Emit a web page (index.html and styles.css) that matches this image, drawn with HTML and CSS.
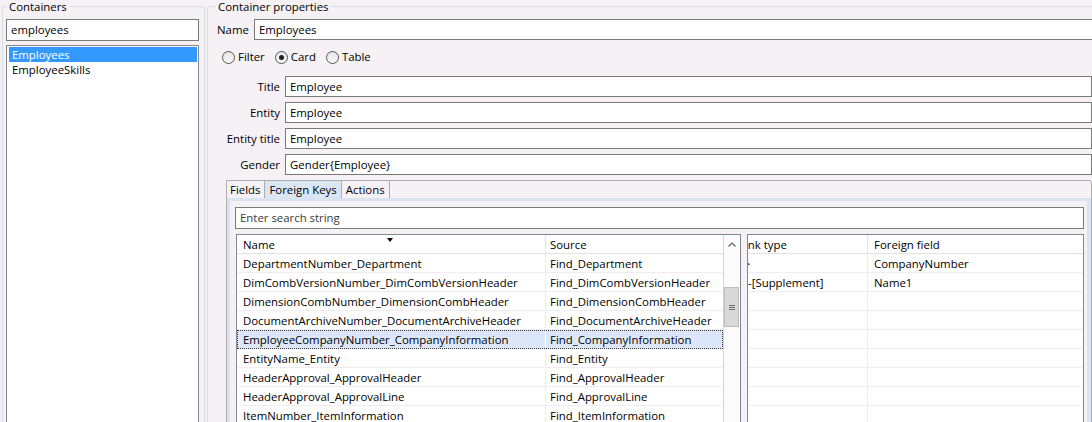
FILE: index.html
```html
<!DOCTYPE html>
<html>
<head>
<meta charset="utf-8">
<link rel="stylesheet" href="styles.css">
</head>
<body>
<div class="app">
  <fieldset class="group group-left">
    <legend>Containers</legend>
    <div class="left-body">
      <div class="field left-search">employees</div>
      <ul class="listbox">
        <li class="selected">Employees</li>
        <li>EmployeeSkills</li>
      </ul>
    </div>
  </fieldset>

  <fieldset class="group group-right">
    <legend>Container properties</legend>
    <div class="right-body">
      <div class="name-row">
        <span class="name-label">Name</span>
        <div class="field name-field">Employees</div>
      </div>

      <div class="radio-row">
        <label class="radio"><span class="circle"></span>Filter</label>
        <label class="radio"><span class="circle checked"></span>Card</label>
        <label class="radio"><span class="circle"></span>Table</label>
      </div>

      <div class="form">
        <span class="form-label">Title</span><div class="field">Employee</div>
        <span class="form-label">Entity</span><div class="field">Employee</div>
        <span class="form-label">Entity title</span><div class="field">Employee</div>
        <span class="form-label">Gender</span><div class="field">Gender{Employee}</div>
      </div>

      <div class="tabs">
        <div class="tab-strip">
          <span class="tab">Fields</span>
          <span class="tab active">Foreign Keys</span>
          <span class="tab">Actions</span>
        </div>
        <div class="tab-panel">
          <div class="field search">Enter search string</div>
          <div class="grids">
            <div class="grid grid-main">
              <div class="table">
                <div class="row head">
                  <div class="cell c-name">Name<span class="sort"></span></div>
                  <div class="cell c-src">Source</div>
                </div>
                <div class="row"><div class="cell c-name">DepartmentNumber_Department</div><div class="cell c-src">Find_Department</div></div>
                <div class="row"><div class="cell c-name">DimCombVersionNumber_DimCombVersionHeader</div><div class="cell c-src">Find_DimCombVersionHeader</div></div>
                <div class="row"><div class="cell c-name">DimensionCombNumber_DimensionCombHeader</div><div class="cell c-src">Find_DimensionCombHeader</div></div>
                <div class="row"><div class="cell c-name">DocumentArchiveNumber_DocumentArchiveHeader</div><div class="cell c-src">Find_DocumentArchiveHeader</div></div>
                <div class="row sel"><div class="cell c-name">EmployeeCompanyNumber_CompanyInformation</div><div class="cell c-src">Find_CompanyInformation</div></div>
                <div class="row"><div class="cell c-name">EntityName_Entity</div><div class="cell c-src">Find_Entity</div></div>
                <div class="row"><div class="cell c-name">HeaderApproval_ApprovalHeader</div><div class="cell c-src">Find_ApprovalHeader</div></div>
                <div class="row"><div class="cell c-name">HeaderApproval_ApprovalLine</div><div class="cell c-src">Find_ApprovalLine</div></div>
                <div class="row"><div class="cell c-name">ItemNumber_ItemInformation</div><div class="cell c-src">Find_ItemInformation</div></div>
              </div>
              <div class="scrollbar">
                <div class="sb-up">
                  <svg width="8" height="5" viewBox="0 0 8 5"><polyline points="0.5,4.5 4,1 7.5,4.5" fill="none" stroke="#606060" stroke-width="1.2"/></svg>
                </div>
                <div class="sb-track">
                  <div class="sb-thumb"><span class="grip"></span><span class="grip"></span><span class="grip"></span></div>
                </div>
              </div>
            </div>

            <div class="grid grid-side">
              <div class="table">
                <div class="row head">
                  <div class="cell c-link"><span class="shift">Link type</span></div>
                  <div class="cell c-ff">Foreign field</div>
                </div>
                <div class="row"><div class="cell c-link"><span class="shift s2">-&gt;</span></div><div class="cell c-ff">CompanyNumber</div></div>
                <div class="row"><div class="cell c-link"><span class="shift s3">&lt;-[Supplement]</span></div><div class="cell c-ff">Name1</div></div>
                <div class="row"><div class="cell c-link"></div><div class="cell c-ff"></div></div>
                <div class="row"><div class="cell c-link"></div><div class="cell c-ff"></div></div>
                <div class="row"><div class="cell c-link"></div><div class="cell c-ff"></div></div>
                <div class="row"><div class="cell c-link"></div><div class="cell c-ff"></div></div>
                <div class="row"><div class="cell c-link"></div><div class="cell c-ff"></div></div>
                <div class="row"><div class="cell c-link"></div><div class="cell c-ff"></div></div>
                <div class="row"><div class="cell c-link"></div><div class="cell c-ff"></div></div>
              </div>
            </div>
          </div>
        </div>
      </div>
    </div>
  </fieldset>
</div>
</body>
</html>
```

FILE: styles.css
```css
* { box-sizing: border-box; }

body {
  margin: 0;
  background: #f5f1f5;
  font-family: "Open Sans", "Liberation Sans", sans-serif;
  font-size: 11.4px;
  color: #000;
  overflow: hidden;
}

.app {
  display: flex;
  height: 422px;
  overflow: hidden;
  padding-left: 2px;
}

.group {
  margin: 0;
  padding: 0;
  border: 1px solid #d5dce3;
  border-radius: 3px;
  min-width: 0;
  height: 440px;
  flex: none;
}

.group legend {
  line-height: 13px;
  padding: 0 2px;
}

.group-left { width: 203px; }
.group-left legend { margin-left: 4px; }

.left-body { padding: 6px 0 0 3px; }

.field {
  background: #fff;
  border: 1px solid #7a7a7a;
  height: 21px;
  line-height: 19px;
  padding-left: 4px;
  white-space: nowrap;
  overflow: hidden;
}

.left-search {
  width: 193px;
  height: 22px;
  line-height: 20px;
  padding-left: 4px;
}

.listbox {
  list-style: none;
  margin: 4px 0 0 0;
  padding: 1px 1px;
  width: 193px;
  height: 400px;
  background: #fff;
  border: 1px solid #828790;
}

.listbox li {
  height: 15px;
  line-height: 15px;
  padding-left: 3px;
  margin-left: 1px;
}

.listbox li.selected {
  background: #3399ff;
  color: #fff;
}

.group-right {
  width: 891px;
  margin-left: 2px;
}

.group-right legend { margin-left: 8px; }

.right-body { padding: 6px 0 0 9px; }

.name-row {
  display: flex;
  align-items: center;
  height: 21px;
}

.name-label { width: 37px; flex: none; }
.name-field { flex: 1; }

.radio-row {
  display: flex;
  align-items: center;
  height: 14px;
  margin: 10px 0 0 5px;
}

.radio {
  display: flex;
  align-items: center;
  margin-right: 10px;
  line-height: 14px;
}

.circle {
  width: 13px;
  height: 13px;
  border-radius: 50%;
  border: 1px solid #555;
  background: linear-gradient(#e6e6e6, #fafafa);
  margin-right: 3px;
  display: flex;
  align-items: center;
  justify-content: center;
}

.circle.checked::after {
  content: "";
  width: 5px;
  height: 5px;
  border-radius: 50%;
  background: #222;
}

.form {
  display: grid;
  grid-template-columns: 63px 807px;
  column-gap: 5px;
  row-gap: 5px;
  margin-top: 12px;
}

.form-label {
  text-align: right;
  line-height: 21px;
  white-space: nowrap;
}

.tabs {
  margin: 5px 0 0 9px;
  width: 866px;
  height: 260px;
  border: 1px solid #adadad;
  border-radius: 0 3px 0 0;
}

.tab-strip {
  display: flex;
  height: 17px;
}

.tab {
  padding: 0 4px;
  line-height: 17px;
  border-right: 1px solid #acacac;
}

.tab:first-child { padding-left: 3px; }

.tab.active { background: #dbe6f4; }

.tab-panel {
  border: 3px solid #d9e4f2;
  border-right-width: 4px;
  height: 240px;
  padding: 6px 0 0 5px;
}

.search {
  width: 849px;
  height: 22px;
  line-height: 20px;
  color: #3a3a3a;
}

.grids {
  display: flex;
  gap: 6px;
  margin: 5px 0 0 1px;
}

.grid {
  background: #fff;
  border: 1px solid #828790;
  height: 200px;
  display: flex;
  overflow: hidden;
}

.grid-main { width: 505px; }
.grid-side { width: 337px; }

.table { flex: none; }
.grid-main .table { width: 486px; }
.grid-side .table { width: 335px; }

.row {
  display: flex;
  height: 19px;
  border-bottom: 1px solid #f0ecf0;
}

.row.head { border-bottom: 1px solid #e3e3e3; }

.cell {
  line-height: 19px;
  white-space: nowrap;
  overflow: hidden;
  position: relative;
}

.c-name {
  width: 309px;
  padding-left: 6px;
  border-right: 1px solid #f0ecf0;
}

.c-src {
  width: 177px;
  padding-left: 4px;
}

.head .c-name, .head .c-link { border-right-color: #e3e3e3; }

.sort {
  position: absolute;
  left: 150px;
  top: 3px;
  width: 0;
  height: 0;
  border-style: solid;
  border-width: 4px 3.5px 0 3.5px;
  border-color: #000 transparent transparent transparent;
}

.row.sel {
  background: #dce8f9;
  outline: 1px dotted #333;
  outline-offset: -1px;
}

.row.sel .c-name { border-right-color: #fff; }

.scrollbar {
  width: 17px;
  flex: none;
  border-left: 1px solid #d6d6d6;
  background: #fbfbfb;
  display: flex;
  flex-direction: column;
}

.sb-up {
  height: 18px;
  display: flex;
  align-items: center;
  justify-content: center;
}

.sb-track {
  flex: 1;
  padding-top: 34px;
}

.sb-thumb {
  margin: 0 1px 0 0;
  height: 40px;
  background: #d9d9d9;
  border: 1px solid #bdbdbd;
  display: flex;
  flex-direction: column;
  align-items: center;
  justify-content: center;
  gap: 1px;
}

.grip {
  width: 6px;
  height: 1px;
  background: #6a6a6a;
}

.c-link {
  width: 120px;
  border-right: 1px solid #f0ecf0;
}

.c-ff {
  flex: 1;
  padding-left: 6px;
}

.shift {
  display: inline-block;
  margin-left: -9px;
}

.shift.s2 { margin-left: -8px; }
.shift.s3 { margin-left: -6.5px; }
```
